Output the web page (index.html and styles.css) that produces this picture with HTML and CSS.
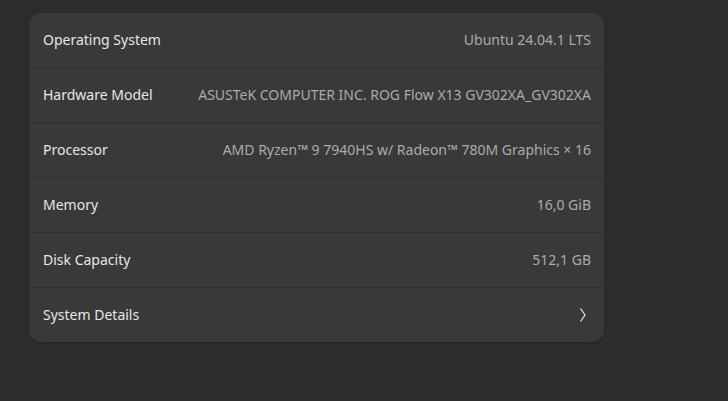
FILE: index.html
```html
<!DOCTYPE html>
<html>
<head>
<meta charset="utf-8">
<link rel="stylesheet" href="styles.css">
</head>
<body>
<div class="card">
  <div class="row"><span class="label">Operating System</span><span class="value">Ubuntu 24.04.1 LTS</span></div>
  <div class="row"><span class="label">Hardware Model</span><span class="value">ASUSTeK COMPUTER INC. ROG Flow X13 GV302XA_GV302XA</span></div>
  <div class="row"><span class="label">Processor</span><span class="value">AMD Ryzen™ 9 7940HS w/ Radeon™ 780M Graphics × 16</span></div>
  <div class="row"><span class="label">Memory</span><span class="value">16,0 GiB</span></div>
  <div class="row"><span class="label">Disk Capacity</span><span class="value">512,1 GB</span></div>
  <div class="row"><span class="label">System Details</span>
    <svg class="chev" width="8" height="16" viewBox="0 0 8 16"><path d="M1.5 1.5 L6 8 L1.5 14.5" fill="none" stroke="#e6e6e6" stroke-width="1.2"/></svg>
  </div>
</div>
</body>
</html>
```
FILE: styles.css
```css
html, body {
  margin: 0;
  background: #2c2c2c;
  height: 100%;
}
body {
  padding: 13px 0 0 29px;
  box-sizing: border-box;
  font-family: "Noto Sans", "Open Sans", sans-serif;
  font-size: 14px;
}
.card {
  width: 575px;
  background: #393939;
  border-radius: 12px;
  overflow: hidden;
  box-shadow: 0 1px 2px rgba(0,0,0,0.25);
}
.row {
  height: 53px;
  display: flex;
  align-items: center;
  justify-content: space-between;
  padding: 0 13px 1px 14px;
  border-bottom: 1px solid #2e2e2e;
}
.row:last-child { border-bottom: none; }
.label { color: #e6e6e6; }
.value { color: #ababab; }
.chev { margin-right: 4px; }
```
